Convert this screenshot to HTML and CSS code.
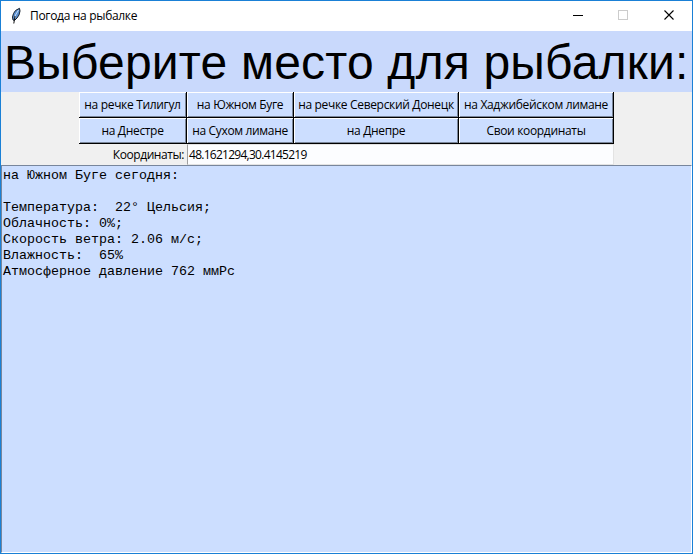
FILE: index.html
```
<!DOCTYPE html>
<html lang="ru">
<head>
<meta charset="utf-8">
<title>Погода на рыбалке</title>
<link rel="stylesheet" href="styles.css">
</head>
<body>
<div class="window">
  <header class="titlebar">
    <svg class="feather" width="12" height="18" viewBox="0 0 12 18">
      <path d="M3 13 L2.500 10 L3.500 6.500 L5.500 3.500 L9.500 1.300 L10 4 L9 8 L7 11 L4.500 13.500 Z" fill="#5a8fcf" stroke="#16202c" stroke-width="1"/>
      <path d="M8.500 3 L5.500 8 L4.500 12" fill="none" stroke="#c5dcf5" stroke-width="1"/>
      <path d="M5 9 L3.800 16.500" fill="none" stroke="#111" stroke-width="1"/>
    </svg>
    <span class="caption">Погода на рыбалке</span>
    <svg class="controls" width="104" height="12" viewBox="0 0 104 12" fill="none">
      <path d="M0 5.500H10" stroke="#000"/>
      <rect x="45.500" y="0.500" width="9" height="9" stroke="#ccc"/>
      <path d="M91.500 0.500L100.500 9.500M100.500 0.500L91.500 9.500" stroke="#000" stroke-width="1.100"/>
    </svg>
  </header>
  <h1 class="heading">Выберите место для рыбалки:</h1>
  <main class="form">
    <button class="place">на речке Тилигул</button>
    <button class="place">на Южном Буге</button>
    <button class="place">на речке Северский Донецк</button>
    <button class="place">на Хаджибейском лимане</button>
    <button class="place">на Днестре</button>
    <button class="place">на Сухом лимане</button>
    <button class="place">на Днепре</button>
    <button class="place">Свои координаты</button>
    <span class="label">Координаты:</span>
    <div class="entry">48.1621294,30.4145219</div>
  </main>
  <pre class="output">на Южном Буге сегодня:

Температура:  22° Цельсия;
Облачность: 0%;
Скорость ветра: 2.06 м/с;
Влажность:  65%
Атмосферное давление 762 ммРс</pre>
</div>
</body>
</html>
```
FILE: styles.css
```
* { box-sizing: border-box; }
body { margin: 0; }
.window {
  width: 693px;
  height: 554px;
  border: 1px solid #1a80d6;
  background: #f0f0f0;
  display: flex;
  flex-direction: column;
  overflow: hidden;
  color: #000;
  font: 12px/16px "Open Sans", "Noto Sans", sans-serif;
}
.titlebar {
  flex: none;
  height: 30px;
  background: #fff;
  display: flex;
  align-items: center;
  padding: 0 15px 0 9px;
}
.feather { margin-right: 8px; }
.caption { letter-spacing: -0.32px; }
.controls { margin-left: auto; }
.heading {
  flex: none;
  margin: 0;
  height: 61px;
  padding-left: 3px;
  background: #c9d9fc;
  font: 48px/63px "Liberation Sans", Arial, sans-serif;
  letter-spacing: 0.2px;
  white-space: nowrap;
}
.form {
  flex: none;
  display: grid;
  grid-template-columns: 108px 107px 165px 155px;
  grid-template-rows: 26px 26px 21px;
  padding-left: 78px;
}
.place {
  border: 0;
  padding: 0 1px 1px 0;
  background: #ccdeff;
  box-shadow: inset -1px -1px #000, inset 1px 1px #fff, inset -2px -2px #7a8699;
  font: inherit;
  color: inherit;
  letter-spacing: -0.33px;
  white-space: nowrap;
}
.label {
  text-align: right;
  padding: 3px 3px 0 0;
  letter-spacing: -0.43px;
}
.entry {
  grid-column: span 3;
  background: #fcfdff;
  border: 1px solid #e3e3e3;
  border-left-color: #a0a0a0;
  padding: 2px 0 0 1px;
  letter-spacing: -0.73px;
}
.output {
  flex: 1;
  margin: 0;
  padding: 2px 1px;
  background: #ccdeff;
  border: 1px solid #fff;
  border-top-color: #78869c;
  border-left-color: #78869c;
  font: 13.33px/16px "Liberation Mono", "Courier New", monospace;
}
```
